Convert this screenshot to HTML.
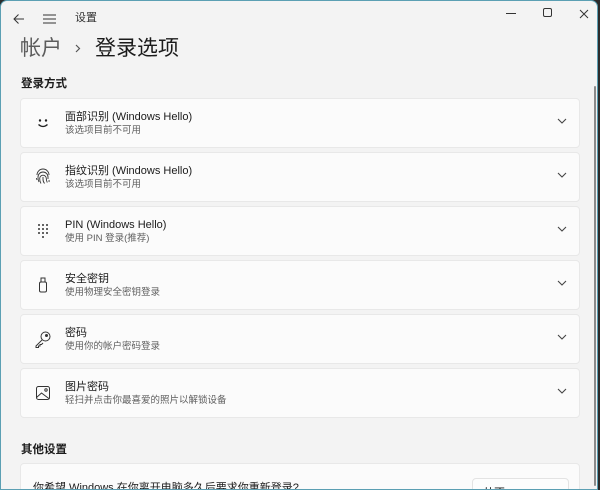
<!DOCTYPE html>
<html><head><meta charset="utf-8"><style>
*{margin:0;padding:0;box-sizing:border-box}
body{width:600px;height:490px;overflow:hidden;background:#2b2b2b;font-family:"Liberation Sans","Noto Sans CJK SC",sans-serif;color:#1b1b1b}
.win{position:absolute;left:0;top:0;width:598px;height:490px;background:#f3f3f3;border:1px solid #5b9fb3;border-radius:7px 7px 0 0;overflow:hidden}
.t{position:absolute;white-space:nowrap;line-height:1.2}
.card{position:absolute;left:19px;width:560px;height:50px;background:#fbfbfb;border:1px solid #e8e8e8;border-radius:4px}
.card .ic{position:absolute;left:12px;top:14px;width:20px;height:20px}
.card .a{position:absolute;left:44px;top:11px;font-size:11px;line-height:14px;color:#1b1b1b;white-space:nowrap}
.card .b{position:absolute;left:44px;top:26px;font-size:9.5px;line-height:12px;color:#5f5f5f;white-space:nowrap}
.card .ch{position:absolute;right:12px;top:19px}
</style></head><body><div class="win">
<svg class="t" style="left:12px;top:12px" width="12" height="12" viewBox="0 0 12 12"><path d="M11 6H1M5.5 1.5L1 6l4.5 4.5" fill="none" stroke="#333" stroke-width="1"/></svg>
<svg class="t" style="left:42px;top:13px" width="13" height="10"><path d="M0 1h13M0 5h13M0 9h13" stroke="#333" stroke-width="1"/></svg>
<div class="t" style="left:74px;top:11px;font-size:11px;color:#333">设置</div>
<svg class="t" style="left:505px;top:12px" width="10" height="2"><path d="M0 .5h10" stroke="#333"/></svg>
<svg class="t" style="left:542px;top:7px" width="10" height="10"><rect x=".5" y=".5" width="8" height="8" rx="1.5" fill="none" stroke="#333"/></svg>
<svg class="t" style="left:578px;top:8px" width="10" height="10"><path d="M1 1l8 8M9 1l-8 8" stroke="#333"/></svg>
<div class="t" style="left:19px;top:35px;font-size:21px;color:#5c5c5c">帐户</div>
<svg class="t" style="left:74px;top:43px" width="6" height="9"><path d="M1 1l3.5 3.5L1 8" fill="none" stroke="#555" stroke-width="1.2"/></svg>
<div class="t" style="left:94px;top:35px;font-size:21px;color:#1b1b1b">登录选项</div>
<div class="t" style="left:20px;top:77px;font-size:11.5px;font-weight:bold">登录方式</div>

<div class="card" style="top:97px"><svg class="ic" viewBox="0 0 20 20"><circle cx="7" cy="7.5" r="1.2" fill="#222"/><circle cx="13" cy="7.5" r="1.2" fill="#222"/><path d="M5.5 11.5q4.5 4 9 0" fill="none" stroke="#222" stroke-width="1.3"/></svg><div class="a">面部识别 (Windows Hello)</div><div class="b">该选项目前不可用</div><svg class="ch" width="10" height="6"><path d="M1 1l4 4 4-4" fill="none" stroke="#444" stroke-width="1.1"/></svg></div>

<div class="card" style="top:151px"><svg class="ic" viewBox="0 0 20 20" fill="none" stroke="#333" stroke-width=".9"><path d="M4 8a6 6 0 0 1 12 0M3.5 11a6.5 6.5 0 0 0 .5 2M6 15a9 9 0 0 1-1-5 5 5 0 0 1 10 0v2M8 16.5a9 9 0 0 1-1.3-5 3.3 3.3 0 0 1 6.6 0 8 8 0 0 0 1 4M10 10v2a7 7 0 0 0 1.5 4.5M16 13a5 5 0 0 1 0 2"/></svg><div class="a">指纹识别 (Windows Hello)</div><div class="b">该选项目前不可用</div><svg class="ch" width="10" height="6"><path d="M1 1l4 4 4-4" fill="none" stroke="#444" stroke-width="1.1"/></svg></div>

<div class="card" style="top:205px"><svg class="ic" viewBox="0 0 20 20" fill="#333"><circle cx="6" cy="4" r="1"/><circle cx="10" cy="4" r="1"/><circle cx="14" cy="4" r="1"/><circle cx="6" cy="8" r="1"/><circle cx="10" cy="8" r="1"/><circle cx="14" cy="8" r="1"/><circle cx="6" cy="12" r="1"/><circle cx="10" cy="12" r="1"/><circle cx="14" cy="12" r="1"/><circle cx="10" cy="16" r="1"/></svg><div class="a">PIN (Windows Hello)</div><div class="b">使用 PIN 登录(推荐)</div><svg class="ch" width="10" height="6"><path d="M1 1l4 4 4-4" fill="none" stroke="#444" stroke-width="1.1"/></svg></div>

<div class="card" style="top:259px"><svg class="ic" viewBox="0 0 20 20" fill="none" stroke="#333" stroke-width="1"><rect x="6.5" y="7" width="7" height="10" rx="1.5"/><path d="M8 7V3h4v4"/></svg><div class="a">安全密钥</div><div class="b">使用物理安全密钥登录</div><svg class="ch" width="10" height="6"><path d="M1 1l4 4 4-4" fill="none" stroke="#444" stroke-width="1.1"/></svg></div>

<div class="card" style="top:313px"><svg class="ic" viewBox="0 0 20 20" fill="none" stroke="#333" stroke-width="1"><circle cx="12.5" cy="7.5" r="4.5"/><circle cx="13.5" cy="6.5" r="1" fill="#333"/><path d="M9.3 10.7L3 17v1.5h2.5V17H7v-1.5h1.5l1.5-1.5"/></svg><div class="a">密码</div><div class="b">使用你的帐户密码登录</div><svg class="ch" width="10" height="6"><path d="M1 1l4 4 4-4" fill="none" stroke="#444" stroke-width="1.1"/></svg></div>

<div class="card" style="top:367px"><svg class="ic" viewBox="0 0 20 20" fill="none" stroke="#333" stroke-width="1"><rect x="3.5" y="3.5" width="13" height="13" rx="2"/><path d="M3.5 14.5l5-4.5 8 6"/><circle cx="13" cy="7" r="1.2"/></svg><div class="a">图片密码</div><div class="b">轻扫并点击你最喜爱的照片以解锁设备</div><svg class="ch" width="10" height="6"><path d="M1 1l4 4 4-4" fill="none" stroke="#444" stroke-width="1.1"/></svg></div>

<div class="t" style="left:20px;top:443px;font-size:11.5px;font-weight:bold">其他设置</div>
<div class="card" style="top:462px;height:40px"><div class="a" style="left:12px;top:17px">你希望 Windows 在你离开电脑多久后要求你重新登录?</div>
<div style="position:absolute;left:451px;top:14px;width:97px;height:30px;background:#fdfdfd;border:1px solid #e3e3e3;border-radius:4px"><div class="t" style="left:10px;top:8px;font-size:11px">从不</div></div></div>
<div style="position:absolute;left:593px;top:85px;width:2px;height:400px;background:#8a8a8a;border-radius:1px"></div>
</div></body></html>
